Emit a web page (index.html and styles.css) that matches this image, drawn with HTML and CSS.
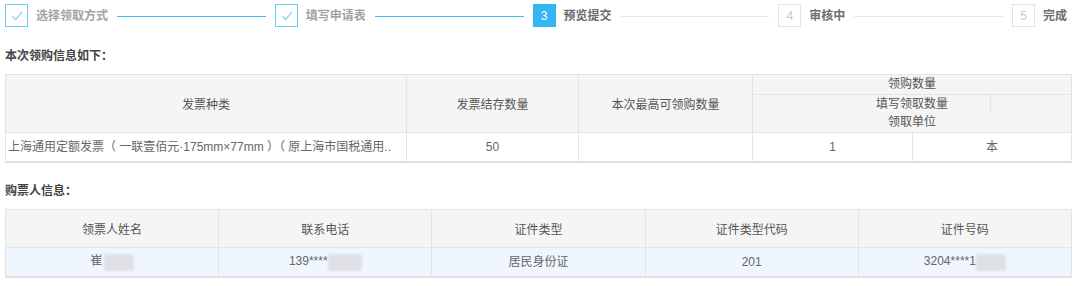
FILE: index.html
```html
<!DOCTYPE html>
<html lang="zh-CN">
<head>
<meta charset="utf-8">
<title>预览提交</title>
<link rel="stylesheet" href="styles.css">
</head>
<body>
<div class="steps">
  <div class="step done">
    <span class="step-box"><svg width="21" height="21" viewBox="0 0 21 21"><path d="M6.3 11.2 L9.6 14.6 L16 6.8" fill="none" stroke="#74cdf5" stroke-width="1.1"/></svg></span>
    <span class="step-text">选择领取方式</span>
  </div>
  <span class="step-line active"></span>
  <div class="step done">
    <span class="step-box"><svg width="21" height="21" viewBox="0 0 21 21"><path d="M6.3 11.2 L9.6 14.6 L16 6.8" fill="none" stroke="#74cdf5" stroke-width="1.1"/></svg></span>
    <span class="step-text">填写申请表</span>
  </div>
  <span class="step-line active"></span>
  <div class="step current">
    <span class="step-box">3</span>
    <span class="step-text">预览提交</span>
  </div>
  <span class="step-line"></span>
  <div class="step todo">
    <span class="step-box">4</span>
    <span class="step-text">审核中</span>
  </div>
  <span class="step-line"></span>
  <div class="step todo">
    <span class="step-box">5</span>
    <span class="step-text">完成</span>
  </div>
</div>

<h3 class="sec-title first">本次领购信息如下：</h3>
<table class="grid grid-invoice">
  <colgroup>
    <col class="c-type"><col class="c-stock"><col class="c-max"><col class="c-qty"><col class="c-unit">
  </colgroup>
  <thead>
    <tr>
      <th>发票种类</th>
      <th>发票结存数量</th>
      <th>本次最高可领购数量</th>
      <th colspan="2" class="nested">
        <div class="sub sub-top">领购数量</div>
        <div class="sub sub-mid">填写领取数量</div>
        <div class="sub sub-bot">领取单位</div>
      </th>
    </tr>
  </thead>
  <tbody>
    <tr>
      <td class="left ellipsis">上海通用定额发票（ 一联壹佰元·175mm×77mm ）（ 原上海市国税通用..</td>
      <td>50</td>
      <td></td>
      <td>1</td>
      <td>本</td>
    </tr>
  </tbody>
</table>

<h3 class="sec-title second">购票人信息：</h3>
<table class="grid grid-buyer">
  <thead>
    <tr>
      <th>领票人姓名</th>
      <th>联系电话</th>
      <th>证件类型</th>
      <th>证件类型代码</th>
      <th>证件号码</th>
    </tr>
  </thead>
  <tbody>
    <tr>
      <td>崔<span class="mask m-name"></span></td>
      <td>139****<span class="mask m-phone"></span></td>
      <td>居民身份证</td>
      <td>201</td>
      <td>3204****1<span class="mask m-id"></span></td>
    </tr>
  </tbody>
</table>
</body>
</html>
```

FILE: styles.css
```css
html, body {
  margin: 0;
  background: #ffffff;
}
body {
  padding: 4px 13px 0 5px;
  font-family: "Liberation Sans", "Noto Sans CJK SC", sans-serif;
  font-size: 12px;
  color: #666;
}

/* steps */
.steps {
  display: flex;
  align-items: center;
  height: 23px;
}
.step {
  display: flex;
  align-items: center;
  gap: 8px;
  flex: none;
}
.step-box {
  box-sizing: border-box;
  width: 23px;
  height: 23px;
  display: flex;
  align-items: center;
  justify-content: center;
  font-family: "Liberation Sans", sans-serif;
  font-size: 12px;
  line-height: 1;
}
.step.done .step-box {
  border: 1px solid #6ccaf5;
}
.step.current .step-box {
  background: #35b6f2;
  color: #fff;
}
.step.todo .step-box {
  border: 1px solid #e3e3e3;
  color: #c8c8c8;
}
.step-text {
  font-weight: 700;
  line-height: 16px;
  white-space: nowrap;
}
.step.done .step-text { color: #a3a3a3; }
.step.current .step-text { color: #6a6a6a; }
.step.todo .step-text { color: #707070; }
.step-line {
  flex: 1;
  height: 1px;
  margin: 1px 9px 0 9px;
  background: #e6e6e6;
}
.step-line.active {
  background: #42bdf5;
}

/* section titles */
.sec-title {
  margin: 0;
  font-size: 12px;
  font-weight: 700;
  line-height: 16px;
  color: #444;
}
.sec-title.first { margin: 21px 0 10px; }
.sec-title.second { margin: 20px 0 10px; }

/* tables */
.grid {
  width: calc(100% + 5px);
  table-layout: fixed;
  border-collapse: separate;
  border-spacing: 0;
  border-top: 1px solid #e4e4e4;
  border-left: 1px solid #e4e4e4;
}
.grid th, .grid td {
  border-right: 1px solid #e4e4e4;
  border-bottom: 1px solid #e4e4e4;
  padding: 0;
  text-align: center;
  vertical-align: middle;
  font-size: 12px;
  white-space: nowrap;
}
.grid th {
  background: #f5f5f5;
  font-weight: 400;
  color: #555;
}
.grid td {
  color: #666;
  height: 28px;
  line-height: 16px;
}
.grid tbody tr:last-child td {
  border-bottom: 2px solid #e0e0e0;
}

.c-type { width: 401px; }
.c-stock { width: 172px; }
.c-max { width: 174px; }
.c-qty { width: 160px; }

.grid-invoice th { height: 57px; }
.grid-invoice th.nested { padding: 0; }
.sub {
  line-height: 19px;
  height: 19px;
}
.sub-top {
  border-bottom: 1px solid #e4e4e4;
}
.sub-mid {
  position: relative;
  height: 18px;
  line-height: 18px;
}
.sub-mid::after {
  content: "";
  position: absolute;
  top: 0;
  bottom: 0;
  left: 237px;
  width: 1px;
  background: #e4e4e4;
}
.grid td.left {
  text-align: left;
  padding-left: 2px;
}
.ellipsis {
  overflow: hidden;
  text-overflow: ellipsis;
}

.grid-buyer th { height: 37px; }
.grid-buyer td { background: #eff6fe; }

.mask {
  display: inline-block;
  height: 17px;
  vertical-align: middle;
  background: #dfe0e5;
  border-radius: 2px;
  filter: blur(1.2px);
}
.m-name { width: 30px; margin-left: 1px; }
.m-phone { width: 34px; }
.m-id { width: 30px; }
```
